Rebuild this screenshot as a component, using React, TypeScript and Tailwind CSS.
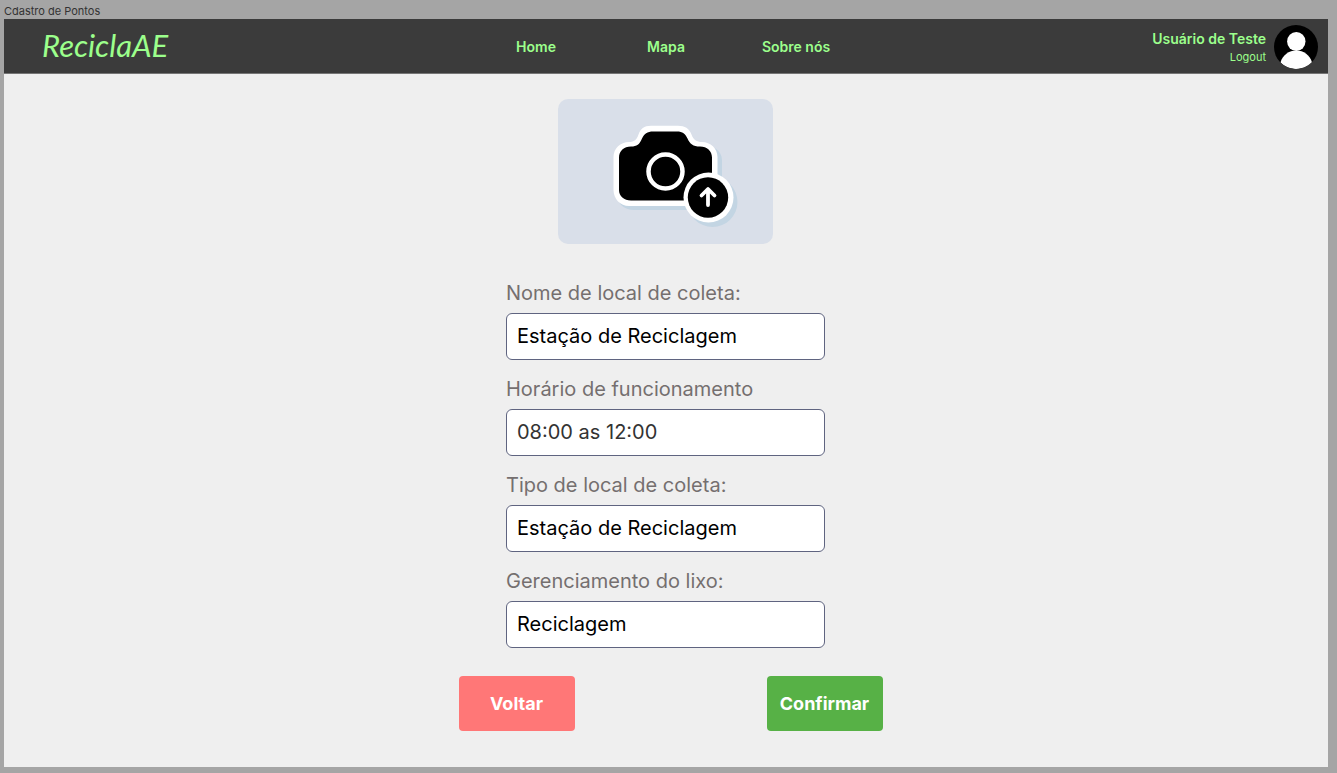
import { useState } from "react";

const navItems = ["Home", "Mapa", "Sobre nós"];

const fields = [
  { id: "nome", label: "Nome de local de coleta:", value: "Estação de Reciclagem", tone: "text-black" },
  { id: "horario", label: "Horário de funcionamento", value: "08:00 as 12:00", tone: "text-[#333333]" },
  { id: "tipo", label: "Tipo de local de coleta:", value: "Estação de Reciclagem", tone: "text-black" },
  { id: "lixo", label: "Gerenciamento do lixo:", value: "Reciclagem", tone: "text-black" },
];

function Avatar() {
  return (
    <svg viewBox="0 0 44 44" className="size-11 shrink-0" aria-hidden="true">
      <clipPath id="avatar-clip">
        <circle cx="22" cy="22" r="22" />
      </clipPath>
      <g clipPath="url(#avatar-clip)">
        <rect width="44" height="44" fill="#000" />
        <ellipse cx="22.3" cy="16.5" rx="9.2" ry="9.5" fill="#fff" />
        <path d="M6.5 37.5C8.5 30 15 25.5 22.300 25.5S36 30 38 37.5C34 42 28 44 22.300 44S10.5 42 6.5 37.5Z" fill="#fff" />
      </g>
    </svg>
  );
}

function CameraUpload() {
  return (
    <svg viewBox="0 0 215 145" className="h-[145px] w-[215px]" aria-hidden="true">
      <g fill="#c3d5e3">
        <path d="M86 31H122C128 31 131 34 133 39C135 44 138 46 144 46C154 46 164 51 164 61V100C164 107 158 111 151 111H76C67 111 61 106 59 98Z" />
        <circle cx="154.5" cy="103" r="25" />
      </g>
      <path
        d="M93 26.8H120C127 26.8 131 29.5 133.5 35.5C135.5 41 138.5 43 144 43C152.5 43 159.5 49.5 159.5 58V91C159.5 99.5 152.5 107 144 107H71C62.5 107 55.5 100 55.5 91V58C55.5 49.5 62.5 43 71 43C76.5 43 78.5 41 80.5 35.5C82.5 30 86 26.8 93 26.8Z"
        fill="#fff"
      />
      <path
        d="M95 32.5H119C124.5 32.5 127.5 35 129.5 39.5C132 45 135 47.5 142 47.5C149 47.5 154 52 154 58.5V91C154 97 149 101.5 143 101.5H73C66 101.5 61 97 61 91V58.5C61 52 66 47.5 73 47.5C79 47.5 81.5 45.5 84 39.5C86 35 89.5 32.5 95 32.5Z"
        fill="#000"
      />
      <circle cx="107.5" cy="72.5" r="17" fill="none" stroke="#fff" strokeWidth="4.5" />
      <circle cx="150.5" cy="98.5" r="25" fill="#fff" />
      <circle cx="150" cy="98.5" r="20.2" fill="#000" />
      <path d="M150 106V91M143.5 96.5L150 90L156.5 96.5" fill="none" stroke="#fff" strokeWidth="3.8" strokeLinecap="round" strokeLinejoin="round" />
    </svg>
  );
}

export default function App() {
  const [values, setValues] = useState(fields.map((f) => f.value));

  return (
    <div className="flex min-h-screen flex-col bg-[#a5a5a5] pr-[9px] pb-1.5 pl-1 font-['Inter',sans-serif]">
      <div className="pt-[3px] text-[11px] leading-4 text-[#333333]">Cdastro de Pontos</div>
      <div className="flex grow flex-col bg-[#efefef]">
        <header className="grid grid-cols-[1fr_auto_1fr] items-center border-b border-[#757575] bg-[#3b3b3b] pt-0.5 text-[#9cff8c]">
          <a href="#" className="pb-1 pl-[38px] font-['Lato',sans-serif] text-[31px] leading-[48px] italic">
            ReciclaAE
          </a>
          <nav className="grid grid-cols-[130px_130px_130px] text-center text-sm font-semibold">
            {navItems.map((item) => (
              <a key={item} href="#">
                {item}
              </a>
            ))}
          </nav>
          <div className="flex items-center justify-end gap-2 pr-2.5">
            <div className="flex flex-col text-right">
              <span className="text-sm leading-5 font-semibold">Usuário de Teste</span>
              <a href="#" className="text-[11px] leading-4">
                Logout
              </a>
            </div>
            <Avatar />
          </div>
        </header>

        <main className="flex flex-col items-center pt-[25px] pr-px">
          <button type="button" aria-label="Enviar foto" className="overflow-hidden rounded-[10px] bg-[#d9dfe9]">
            <CameraUpload />
          </button>

          <form className="flex flex-col items-center pt-[35px]" onSubmit={(e) => e.preventDefault()}>
            <div className="flex w-[319px] flex-col gap-[15px]">
              {fields.map((field, i) => (
                <div key={field.id} className="flex flex-col gap-1.5">
                  <label htmlFor={field.id} className="text-xl leading-7 text-[#756f6f]">
                    {field.label}
                  </label>
                  <input
                    id={field.id}
                    value={values[i]}
                    onChange={(e) => setValues(values.map((v, j) => (j === i ? e.target.value : v)))}
                    className={`h-[47px] w-full rounded-md border border-[#5f6480] bg-white px-2.5 pb-0.5 text-xl ${field.tone}`}
                  />
                </div>
              ))}
            </div>
            <div className="flex gap-48 pt-7 pl-2.5 text-lg font-bold text-white">
              <button type="button" className="h-[55px] w-[116px] rounded bg-[#ff7777]">
                Voltar
              </button>
              <button type="submit" className="h-[55px] w-[116px] rounded bg-[#57b146]">
                Confirmar
              </button>
            </div>
          </form>
        </main>
      </div>
    </div>
  );
}
